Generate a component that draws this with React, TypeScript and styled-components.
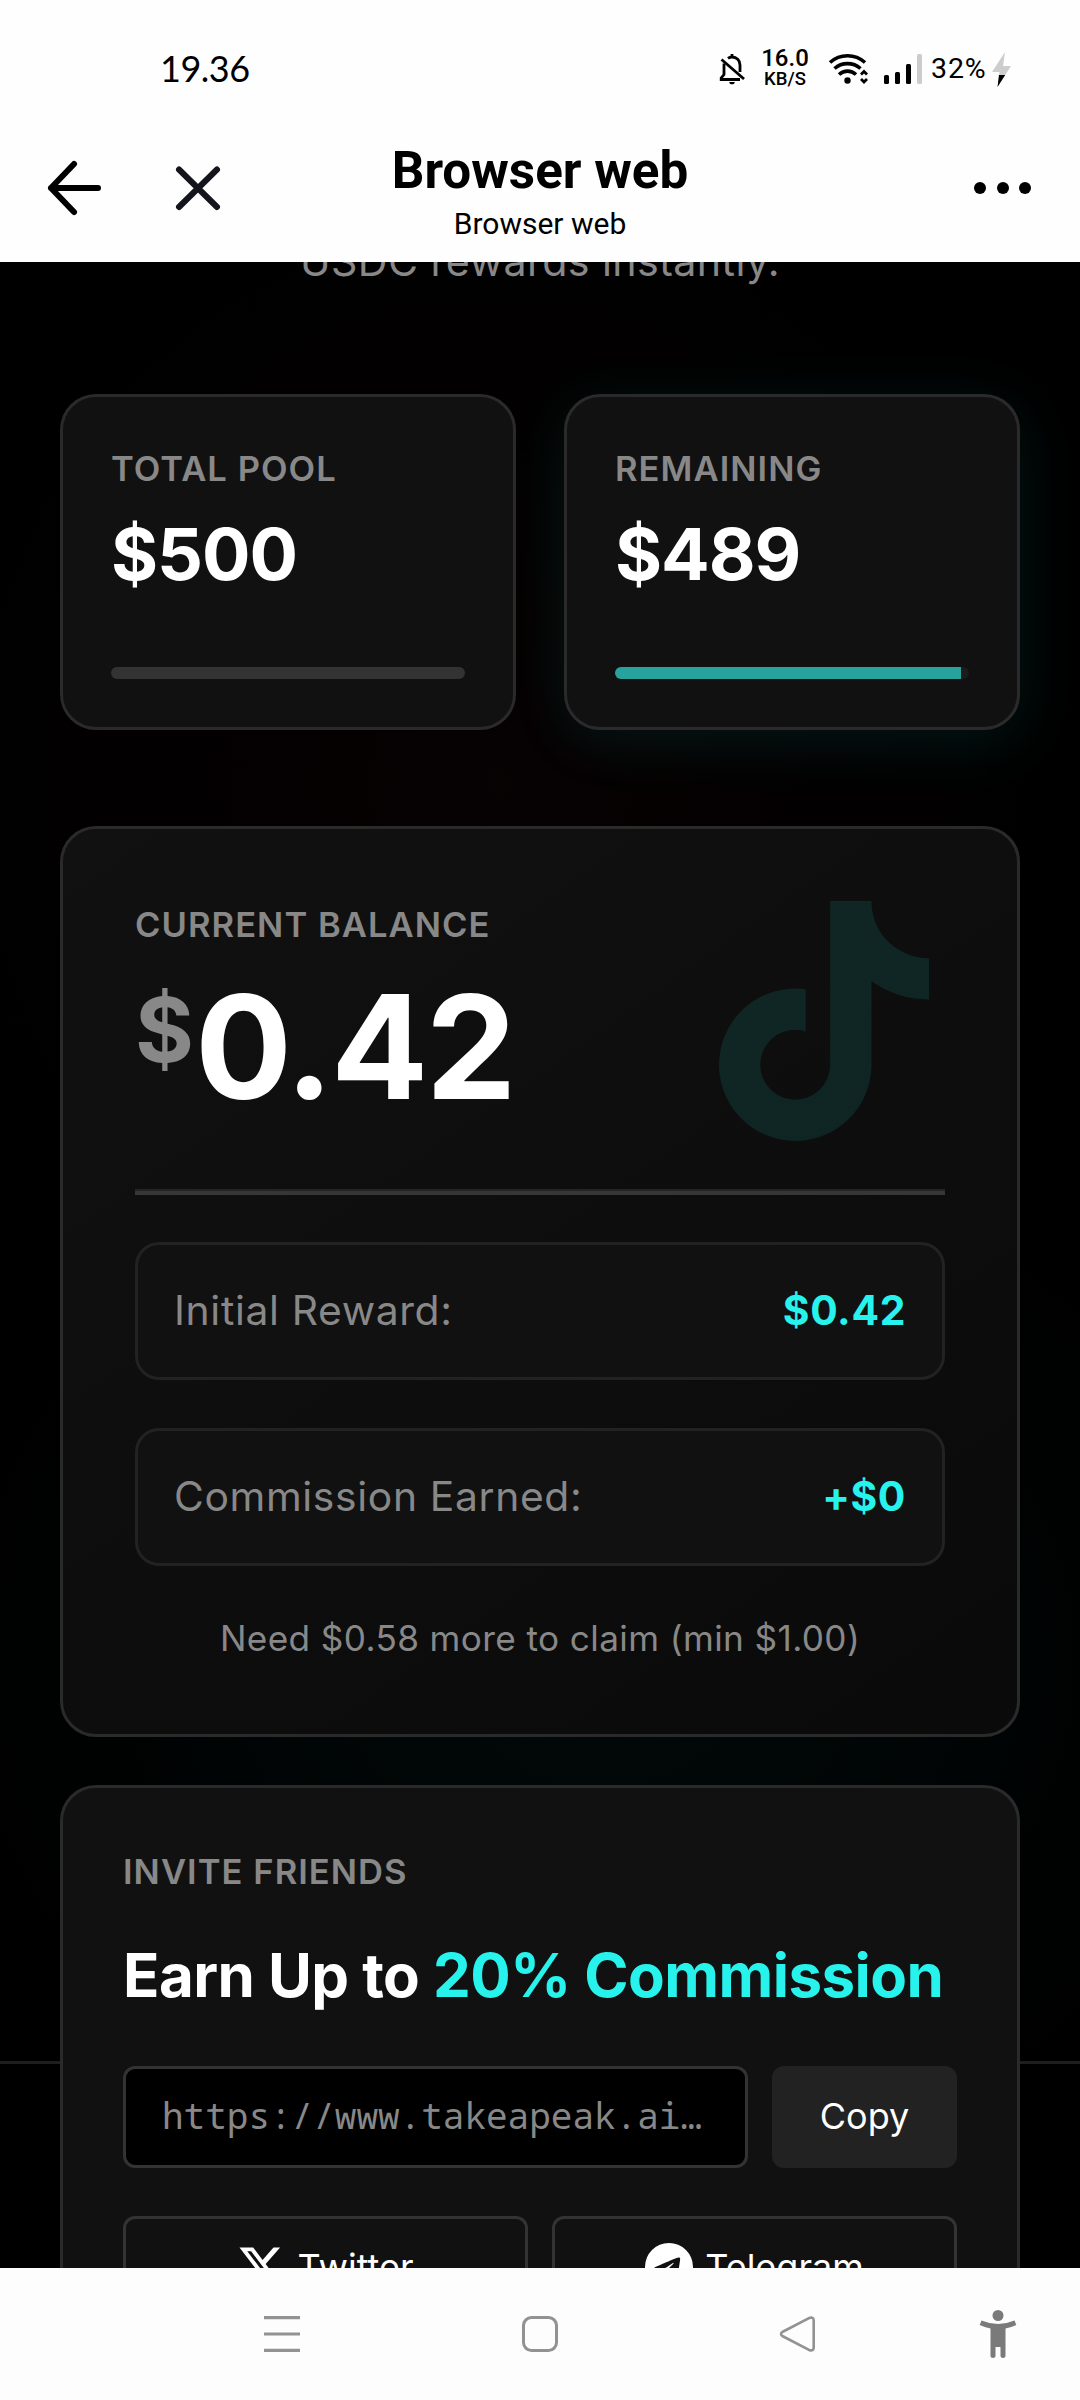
import React from "react";
import styled, { createGlobalStyle } from "styled-components";
import { FaTiktok } from "react-icons/fa";

const CYAN = "#27f3ec";
const MUTED = "#888888";
const LINE = "#2a2a2a";

const GlobalStyle = createGlobalStyle`
  * { box-sizing: border-box; }
  html, body { margin: 0; background: #000; }
  body { font-family: Inter, "Liberation Sans", sans-serif; }
`;

const Screen = styled.div`
  display: flex;
  flex-direction: column;
  width: 1080px;
  height: 2400px;
  overflow: hidden;
`;

/* ---------- system status bar + browser header ---------- */

const TopChrome = styled.header`
  flex: none;
  height: 262px;
  background: #fefefe;
  color: #000;
`;

const StatusBar = styled.div`
  display: flex;
  align-items: center;
  justify-content: space-between;
  height: 138px;
  padding: 0 68px 0 160px;
`;

const Clock = styled.span`
  padding-bottom: 3px;
  font: 400 36px/44px Lato, sans-serif;
  letter-spacing: -0.5px;
`;

const StatusIcons = styled.div`
  display: flex;
  align-items: center;
`;

const NetSpeed = styled.div`
  display: flex;
  flex-direction: column;
  align-items: center;
  width: 48px;
  margin: 0 19px 0 16px;
  font-family: Roboto, sans-serif;
  font-weight: 500;
`;

const SpeedValue = styled.span`
  font-size: 24px;
  line-height: 21px;
`;

const SpeedUnit = styled.span`
  font-size: 18.5px;
  line-height: 21px;
`;

const Battery = styled.span`
  width: 55px;
  margin: 0 6px 0 8px;
  font: 400 28.5px/34px Roboto, sans-serif;
  letter-spacing: 0.9px;
`;

const BrowserBar = styled.div`
  display: grid;
  grid-template-columns: 240px 1fr 240px;
  height: 124px;
`;

const NavButtons = styled.div`
  display: flex;
  align-items: center;
  gap: 72px;
  height: 100px;
  padding-left: 46px;
`;

const Titles = styled.div`
  display: flex;
  flex-direction: column;
  align-items: center;
  font-family: Roboto, sans-serif;
`;

const Title = styled.h1`
  margin: 3px 0 0;
  font-size: 51.2px;
  line-height: 60px;
  font-weight: 700;
`;

const Subtitle = styled.span`
  margin-top: 5px;
  font-size: 30px;
  line-height: 36px;
`;

const More = styled.div`
  display: flex;
  align-items: center;
  justify-content: flex-end;
  gap: 10.5px;
  height: 100px;
  padding-right: 49px;
`;

const Dot = styled.i`
  width: 12px;
  height: 12px;
  border-radius: 50%;
  background: #000;
`;

/* ---------- page ---------- */

const Page = styled.main`
  position: relative;
  flex: none;
  height: 2006px;
  overflow: hidden;
  padding: 0 60px;
  background:
    radial-gradient(ellipse 620px 660px at 500px 520px, rgba(254, 44, 85, 0.028), transparent),
    radial-gradient(ellipse 660px 560px at 600px 1400px, rgba(37, 244, 238, 0.038), transparent),
    #000;
`;

const FooterZone = styled.div`
  position: absolute;
  left: 0;
  right: 0;
  top: 1799px;
  bottom: 0;
  border-top: 3px solid #1e1e1e;
  background: #000;
`;

const Content = styled.div`
  position: relative;
  display: flex;
  flex-direction: column;
`;

const Lead = styled.p`
  margin: -31px 0 103px;
  color: ${MUTED};
  font-size: 41.2px;
  line-height: 60px;
  letter-spacing: 0.41px;
  text-align: center;
`;

const StatGrid = styled.div`
  display: grid;
  grid-template-columns: 1fr 1fr;
  gap: 48px;
`;

const StatCard = styled.section<{ $glow?: boolean }>`
  display: flex;
  flex-direction: column;
  height: 336px;
  padding: 48px;
  border: 3px solid ${LINE};
  border-radius: 36px;
  background: #111;
  box-shadow: ${(p) => (p.$glow ? "0 12px 60px rgba(37, 244, 238, 0.09)" : "none")};
`;

const Label = styled.span`
  color: ${MUTED};
  font-size: 34.56px;
  line-height: 48px;
  font-weight: 600;
  letter-spacing: 1.05px;
  white-space: nowrap;
`;

const StatValue = styled.strong`
  margin-top: 18px;
  color: #fff;
  font-size: 72px;
  line-height: 86px;
  font-weight: 700;
  letter-spacing: -1.1px;
`;

const Track = styled.div<{ $color: string }>`
  height: 12px;
  margin-top: auto;
  border-radius: 6px;
  overflow: hidden;
  background: ${(p) => p.$color};
`;

const Fill = styled.div`
  height: 100%;
  background: #28a29d;
`;

const BalanceCard = styled.section`
  margin-top: 96px;
  height: 911px;
  padding: 72px;
  border: 3px solid ${LINE};
  border-radius: 36px;
  background: linear-gradient(145deg, #111 0%, #0a0a0a 100%);
`;

const BalanceHead = styled.div`
  display: flex;
  justify-content: space-between;
  height: 240px;
  padding-right: 16px;
`;

const BalanceText = styled.div`
  display: flex;
  flex-direction: column;
`;

const Amount = styled.div`
  display: flex;
  align-items: flex-start;
  margin-top: 25.5px;
  color: #fff;
  font-size: 144px;
  line-height: 144px;
  font-weight: 700;
  letter-spacing: -2.5px;
`;

const Currency = styled.span`
  margin: 10px 1px 0 0;
  color: ${MUTED};
  font-size: 90px;
  line-height: 90px;
  letter-spacing: 0;
`;

const Watermark = styled(FaTiktok)`
  width: 210px;
  height: 240px;
  color: ${CYAN};
  opacity: 0.1;
`;

const Divider = styled.div`
  height: 6px;
  margin: 48px 0 47px;
  border-top: 2px solid #242424;
  background: #363636;
`;

const Rows = styled.div`
  display: flex;
  flex-direction: column;
  gap: 48px;
`;

const Row = styled.div`
  display: flex;
  align-items: center;
  justify-content: space-between;
  height: 138px;
  padding: 0 36px 2px;
  border: 3px solid #222;
  border-radius: 24px;
  background: #111;
  font-size: 40.8px;
  letter-spacing: 0.65px;
`;

const RowLabel = styled.span`
  color: ${MUTED};
`;

const RowValue = styled.span`
  color: ${CYAN};
  font-weight: 700;
`;

const Note = styled.p`
  margin: 45px 0 0;
  color: ${MUTED};
  font-size: 35.2px;
  line-height: 54px;
  letter-spacing: 0.38px;
  text-align: center;
`;

const InviteCard = styled.section`
  display: flex;
  flex-direction: column;
  margin-top: 48px;
  height: 720px;
  padding: 60px;
  border: 3px solid ${LINE};
  border-radius: 36px;
  background: #111;
`;

const Heading = styled.h2`
  margin: 43px 0 55px;
  color: #fff;
  font-size: 60px;
  line-height: 72px;
  font-weight: 700;
  letter-spacing: -0.55px;
  white-space: nowrap;
`;

const Accent = styled.span`
  color: ${CYAN};
`;

const LinkRow = styled.div`
  display: flex;
  gap: 24px;
  height: 102px;
`;

const LinkField = styled.div`
  flex: none;
  width: 625px;
  padding: 0 36px;
  border: 3px solid #333;
  border-radius: 12px;
  background: #000;
  color: ${MUTED};
  font: 400 36px/94px "Noto Sans Mono", "DejaVu Sans Mono", monospace;
  white-space: nowrap;
`;

const CopyButton = styled.button`
  flex: 1;
  padding: 0 0 2px;
  border: 0;
  border-radius: 12px;
  background: #222;
  color: #fff;
  font: 400 36px/100px Inter, sans-serif;
`;

const ShareRow = styled.div`
  display: grid;
  grid-template-columns: 1fr 1fr;
  gap: 24px;
  margin-top: 48px;
`;

const ShareButton = styled.button`
  display: flex;
  align-items: center;
  justify-content: center;
  gap: 12px;
  height: 102px;
  padding: 0 0 1px;
  border: 3px solid #333;
  border-radius: 12px;
  background: transparent;
  color: #fff;
  font: 400 36px/48px Inter, sans-serif;
`;

/* ---------- system navigation ---------- */

const SystemNav = styled.nav`
  display: flex;
  flex: none;
  align-items: flex-start;
  height: 132px;
  padding: 40px 60px 0 262px;
  background: #fdfdfd;
`;

const NavGap = styled.div<{ $w: number }>`
  flex: none;
  width: ${(p) => p.$w}px;
`;

const BellOff = () => (
  <svg width="26" height="32" viewBox="0 0 26 32" fill="none" stroke="#000" strokeWidth="2.8">
    <path d="M9 5.4C10 4.6 11.5 4 13 4c4.700 0 8 3.500 8 8v7M5 10.500V21.500L2.200 25v1.500H21" />
    <path d="M2.500 6.500L25 26" />
    <path d="M13 1v3" />
    <path d="M10.300 29h5.400a2.700 2.300 0 0 1-5.400 0z" fill="#000" stroke="none" />
  </svg>
);

const Wifi = () => (
  <svg width="42" height="32" viewBox="0 0 42 32" fill="none" stroke="#000" strokeWidth="3.6">
    <path d="M2 9.500C12 0.500 27 0.500 37 9.500" />
    <path d="M6.500 15.500C14 9 25 9 32.500 15.500" />
    <path d="M11 21.500c5-4.500 12-4.500 17 0" />
    <circle cx="19.500" cy="27.500" r="3.200" fill="#000" stroke="none" />
    <path d="M33 21.500l3-3 3 3M33 26l3 3 3-3" strokeWidth="2.800" />
  </svg>
);

const Signal = () => (
  <svg width="39" height="30" viewBox="0 0 39 30">
    <rect x="0" y="21" width="5" height="9" rx="1.500" />
    <rect x="11" y="18" width="5" height="12" rx="1.500" />
    <rect x="22" y="10" width="5" height="20" rx="1.500" />
    <rect x="33" y="0" width="5" height="30" rx="1.500" fill="#ccc" />
  </svg>
);

const Bolt = () => (
  <svg width="20" height="35" viewBox="0 0 20 35">
    <path d="M13 0L0 20h7.500l-2 15L19 14h-8z" fill="#cdcdcd" />
    <path d="M7 23h6.200L5.500 35z" />
  </svg>
);

const BackArrow = () => (
  <svg width="56" height="60" viewBox="0 0 56 60" fill="none" stroke="#000" strokeWidth="6" strokeLinecap="round" strokeLinejoin="round">
    <path d="M28 6L5 30l23 24M5 30h47" />
  </svg>
);

const Close = () => (
  <svg width="48" height="48" viewBox="0 0 48 48" fill="none" stroke="#14141c" strokeWidth="6" strokeLinecap="round">
    <path d="M5 5.500l38 37.500M43 5.500L5 43" />
  </svg>
);

const XLogo = () => (
  <svg width="48" height="48" viewBox="0 0 24 24" fill="currentColor">
    <path d="M18.244 2.250h3.308l-7.227 8.260 8.502 11.240H16.170l-5.214-6.817L4.990 21.750H1.680l7.730-8.835L1.254 2.250H8.080l4.713 6.231zm-1.161 17.520h1.833L7.084 4.126H5.117z" />
  </svg>
);

const TelegramLogo = () => (
  <svg width="48" height="48" viewBox="0 0 24 24" fill="currentColor">
    <path d="M11.944 0A12 12 0 0 0 0 12a12 12 0 0 0 12 12 12 12 0 0 0 12-12A12 12 0 0 0 12 0a12 12 0 0 0-.056 0zm4.962 7.224c.1-.002.321.023.465.14a.506.506 0 0 1 .171.325c.016.093.036.306.02.472-.18 1.898-.962 6.502-1.360 8.627-.168.900-.499 1.201-.820 1.230-.696.065-1.225-.460-1.900-.902-1.056-.693-1.653-1.124-2.678-1.800-1.185-.780-.417-1.210.258-1.910.177-.184 3.247-2.977 3.307-3.230.007-.032.014-.150-.056-.212s-.174-.041-.249-.024c-.106.024-1.793 1.140-5.061 3.345-.480.330-.913.490-1.302.480-.428-.008-1.252-.241-1.865-.440-.752-.245-1.349-.374-1.297-.789.027-.216.325-.437.893-.663 3.498-1.524 5.830-2.529 6.998-3.014 3.332-1.386 4.025-1.627 4.476-1.635z" />
  </svg>
);

const MenuIcon = () => (
  <svg width="40" height="52" viewBox="0 0 40 52" stroke="#929292" strokeWidth="3.200">
    <path d="M2 9.600h36M2 26h36M2 42.400h36" />
  </svg>
);

const HomeIcon = () => (
  <svg width="40" height="52" viewBox="0 0 40 52" fill="none" stroke="#929292" strokeWidth="3">
    <rect x="3.500" y="9.500" width="33" height="33" rx="8" />
  </svg>
);

const BackIcon = () => (
  <svg width="40" height="52" viewBox="0 0 40 52" fill="none" stroke="#929292" strokeWidth="2.600" strokeLinejoin="round">
    <path d="M4.300 24L31 10.100q4.700-1.600 4.700 2.400v27q0 4-4.700 2.400L4.300 28q-2.600-2 0-4z" />
  </svg>
);

const PersonIcon = () => (
  <svg width="40" height="52" viewBox="0 0 40 52" fill="#7a7a7a">
    <circle cx="20" cy="7.500" r="5.500" />
    <path d="M3.500 12.500Q20 19.500 36.500 12.500l1.800 4.500Q33 19.500 27.500 20.500V48q0 2-2.500 2t-2.500-2V39h-5v9q0 2-2.500 2t-2.500-2V20.500Q7 19.500 1.700 17z" />
  </svg>
);

const REMAINING = 489;
const POOL = 500;

export default function App() {
  return (
    <Screen>
      <GlobalStyle />
      <TopChrome>
        <StatusBar>
          <Clock>19.36</Clock>
          <StatusIcons>
            <BellOff />
            <NetSpeed>
              <SpeedValue>16.0</SpeedValue>
              <SpeedUnit>KB/S</SpeedUnit>
            </NetSpeed>
            <Wifi />
            <NavGap $w={14} />
            <Signal />
            <Battery>32%</Battery>
            <Bolt />
          </StatusIcons>
        </StatusBar>
        <BrowserBar>
          <NavButtons>
            <BackArrow />
            <Close />
          </NavButtons>
          <Titles>
            <Title>Browser web</Title>
            <Subtitle>Browser web</Subtitle>
          </Titles>
          <More>
            <Dot />
            <Dot />
            <Dot />
          </More>
        </BrowserBar>
      </TopChrome>

      <Page>
        <FooterZone />
        <Content>
          <Lead>USDC rewards instantly.</Lead>
          <StatGrid>
            <StatCard>
              <Label>TOTAL POOL</Label>
              <StatValue>${POOL}</StatValue>
              <Track $color="#333" />
            </StatCard>
            <StatCard $glow>
              <Label>REMAINING</Label>
              <StatValue>${REMAINING}</StatValue>
              <Track $color="#1c1c1c">
                <Fill style={{ width: `${(REMAINING / POOL) * 100}%` }} />
              </Track>
            </StatCard>
          </StatGrid>

          <BalanceCard>
            <BalanceHead>
              <BalanceText>
                <Label>CURRENT BALANCE</Label>
                <Amount>
                  <Currency>$</Currency>0.42
                </Amount>
              </BalanceText>
              <Watermark />
            </BalanceHead>
            <Divider />
            <Rows>
              <Row>
                <RowLabel>Initial Reward:</RowLabel>
                <RowValue>$0.42</RowValue>
              </Row>
              <Row>
                <RowLabel>Commission Earned:</RowLabel>
                <RowValue>+$0</RowValue>
              </Row>
            </Rows>
            <Note>Need $0.58 more to claim (min $1.00)</Note>
          </BalanceCard>

          <InviteCard>
            <Label>INVITE FRIENDS</Label>
            <Heading>
              Earn Up to <Accent>20% Commission</Accent>
            </Heading>
            <LinkRow>
              <LinkField>https://www.takeapeak.ai…</LinkField>
              <CopyButton>Copy</CopyButton>
            </LinkRow>
            <ShareRow>
              <ShareButton>
                <XLogo />
                Twitter
              </ShareButton>
              <ShareButton>
                <TelegramLogo />
                Telegram
              </ShareButton>
            </ShareRow>
          </InviteCard>
        </Content>
      </Page>

      <SystemNav>
        <MenuIcon />
        <NavGap $w={218} />
        <HomeIcon />
        <NavGap $w={218} />
        <BackIcon />
        <NavGap $w={160} />
        <PersonIcon />
      </SystemNav>
    </Screen>
  );
}
